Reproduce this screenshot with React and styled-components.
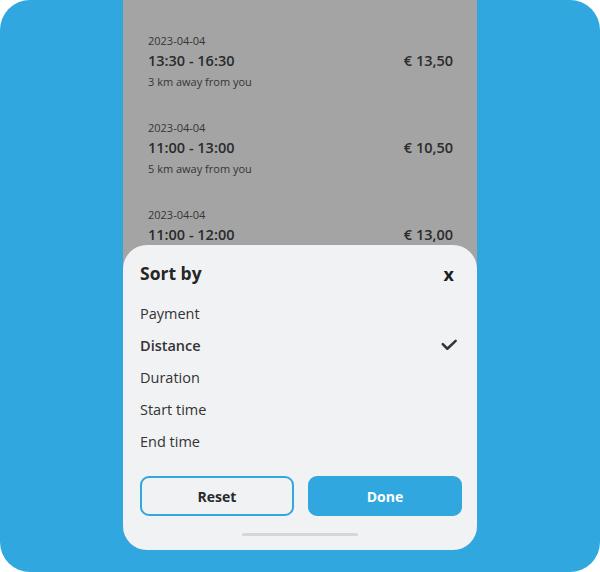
import styled, { createGlobalStyle } from 'styled-components';

const GlobalStyle = createGlobalStyle`
  body {
    margin: 0;
    font-family: "Open Sans", "Noto Sans", sans-serif;
  }
`

const Frame = styled.div`
  width: 600px;
  height: 572px;
  background: #31a7df;
  border-radius: 30px;
  overflow: hidden;
  display: flex;
  justify-content: center;
`

const Phone = styled.div`
  width: 354px;
  height: 550px;
  background: #a4a4a4;
  border-radius: 0 0 24px 24px;
  overflow: hidden;
  display: flex;
  flex-direction: column;
`

const List = styled.div`
  flex: 1;
  overflow: hidden;
  padding: 33px 24px 0 25px;
  display: flex;
  flex-direction: column;
  gap: 31px;
`

const Slot = styled.div`
  display: flex;
  flex-direction: column;
`

const DateText = styled.div`
  font-size: 11px;
  line-height: 15px;
  color: #353535;
`

const SlotRow = styled.div`
  display: flex;
  justify-content: space-between;
  align-items: center;
  margin: 3px 0 3px;
  font-size: 14.5px;
  line-height: 20px;
  font-weight: 600;
  color: #2b2b2b;
`

const Distance = styled.div`
  font-size: 11px;
  line-height: 15px;
  color: #353535;
`

const Sheet = styled.div`
  height: 305px;
  flex-shrink: 0;
  background: #f1f2f4;
  border-radius: 24px 24px 0 0;
  padding: 16px 15px 0 17px;
  box-sizing: border-box;
  display: flex;
  flex-direction: column;
`

const SheetHeader = styled.div`
  display: flex;
  justify-content: space-between;
  align-items: center;
  height: 24px;
  margin-bottom: 12px;
`

const Title = styled.h2`
  margin: 0;
  font-size: 17.5px;
  font-weight: 700;
  color: #262626;
`

const Close = styled.button`
  border: none;
  background: none;
  padding: 0;
  margin-right: 8px;
  margin-top: 2px;
  font-family: inherit;
  font-size: 18px;
  line-height: 20px;
  font-weight: 700;
  color: #1e1e1e;
  cursor: pointer;
`

const Option = styled.div`
  display: flex;
  justify-content: space-between;
  align-items: center;
  height: 32px;
  font-size: 14.5px;
  font-weight: ${p => (p.$active ? 600 : 400)};
  color: #333;
`

const Check = styled.svg`
  margin-right: 3px;
`

const Buttons = styled.div`
  display: flex;
  gap: 14px;
  margin-top: 19px;
`

const Button = styled.button`
  flex: 1;
  height: 40px;
  border-radius: 9px;
  box-sizing: border-box;
  border: 2px solid #31a7df;
  background: ${p => (p.$primary ? '#31a7df' : 'transparent')};
  color: ${p => (p.$primary ? '#fff' : '#2a2a2a')};
  font-family: inherit;
  font-size: 14px;
  font-weight: 700;
  cursor: pointer;
`

const Handle = styled.div`
  width: 116px;
  height: 3px;
  border-radius: 2px;
  background: #d5d6d8;
  align-self: center;
  margin: 17px 0 0 -2px;
`

const slots = [
  { date: '2023-04-04', time: '13:30 - 16:30', price: '€ 13,50', km: 3 },
  { date: '2023-04-04', time: '11:00 - 13:00', price: '€ 10,50', km: 5 },
  { date: '2023-04-04', time: '11:00 - 12:00', price: '€ 13,00', km: 2 },
]

const options = ['Payment', 'Distance', 'Duration', 'Start time', 'End time']

export default function App() {
  const selected = 'Distance'
  return (
    <>
      <GlobalStyle />
      <Frame>
        <Phone>
          <List>
            {slots.map((s, i) => (
              <Slot key={i}>
                <DateText>{s.date}</DateText>
                <SlotRow>
                  <span>{s.time}</span>
                  <span>{s.price}</span>
                </SlotRow>
                <Distance>{s.km} km away from you</Distance>
              </Slot>
            ))}
          </List>
          <Sheet>
            <SheetHeader>
              <Title>Sort by</Title>
              <Close>x</Close>
            </SheetHeader>
            {options.map(o => (
              <Option key={o} $active={o === selected}>
                <span>{o}</span>
                {o === selected && (
                  <Check width="20" height="20" viewBox="0 0 24 24" fill="none" stroke="#333" strokeWidth="3" strokeLinecap="round" strokeLinejoin="round">
                    <polyline points="20 7 10 16.5 4.5 11" />
                  </Check>
                )}
              </Option>
            ))}
            <Buttons>
              <Button>Reset</Button>
              <Button $primary>Done</Button>
            </Buttons>
            <Handle />
          </Sheet>
        </Phone>
      </Frame>
    </>
  )
}
